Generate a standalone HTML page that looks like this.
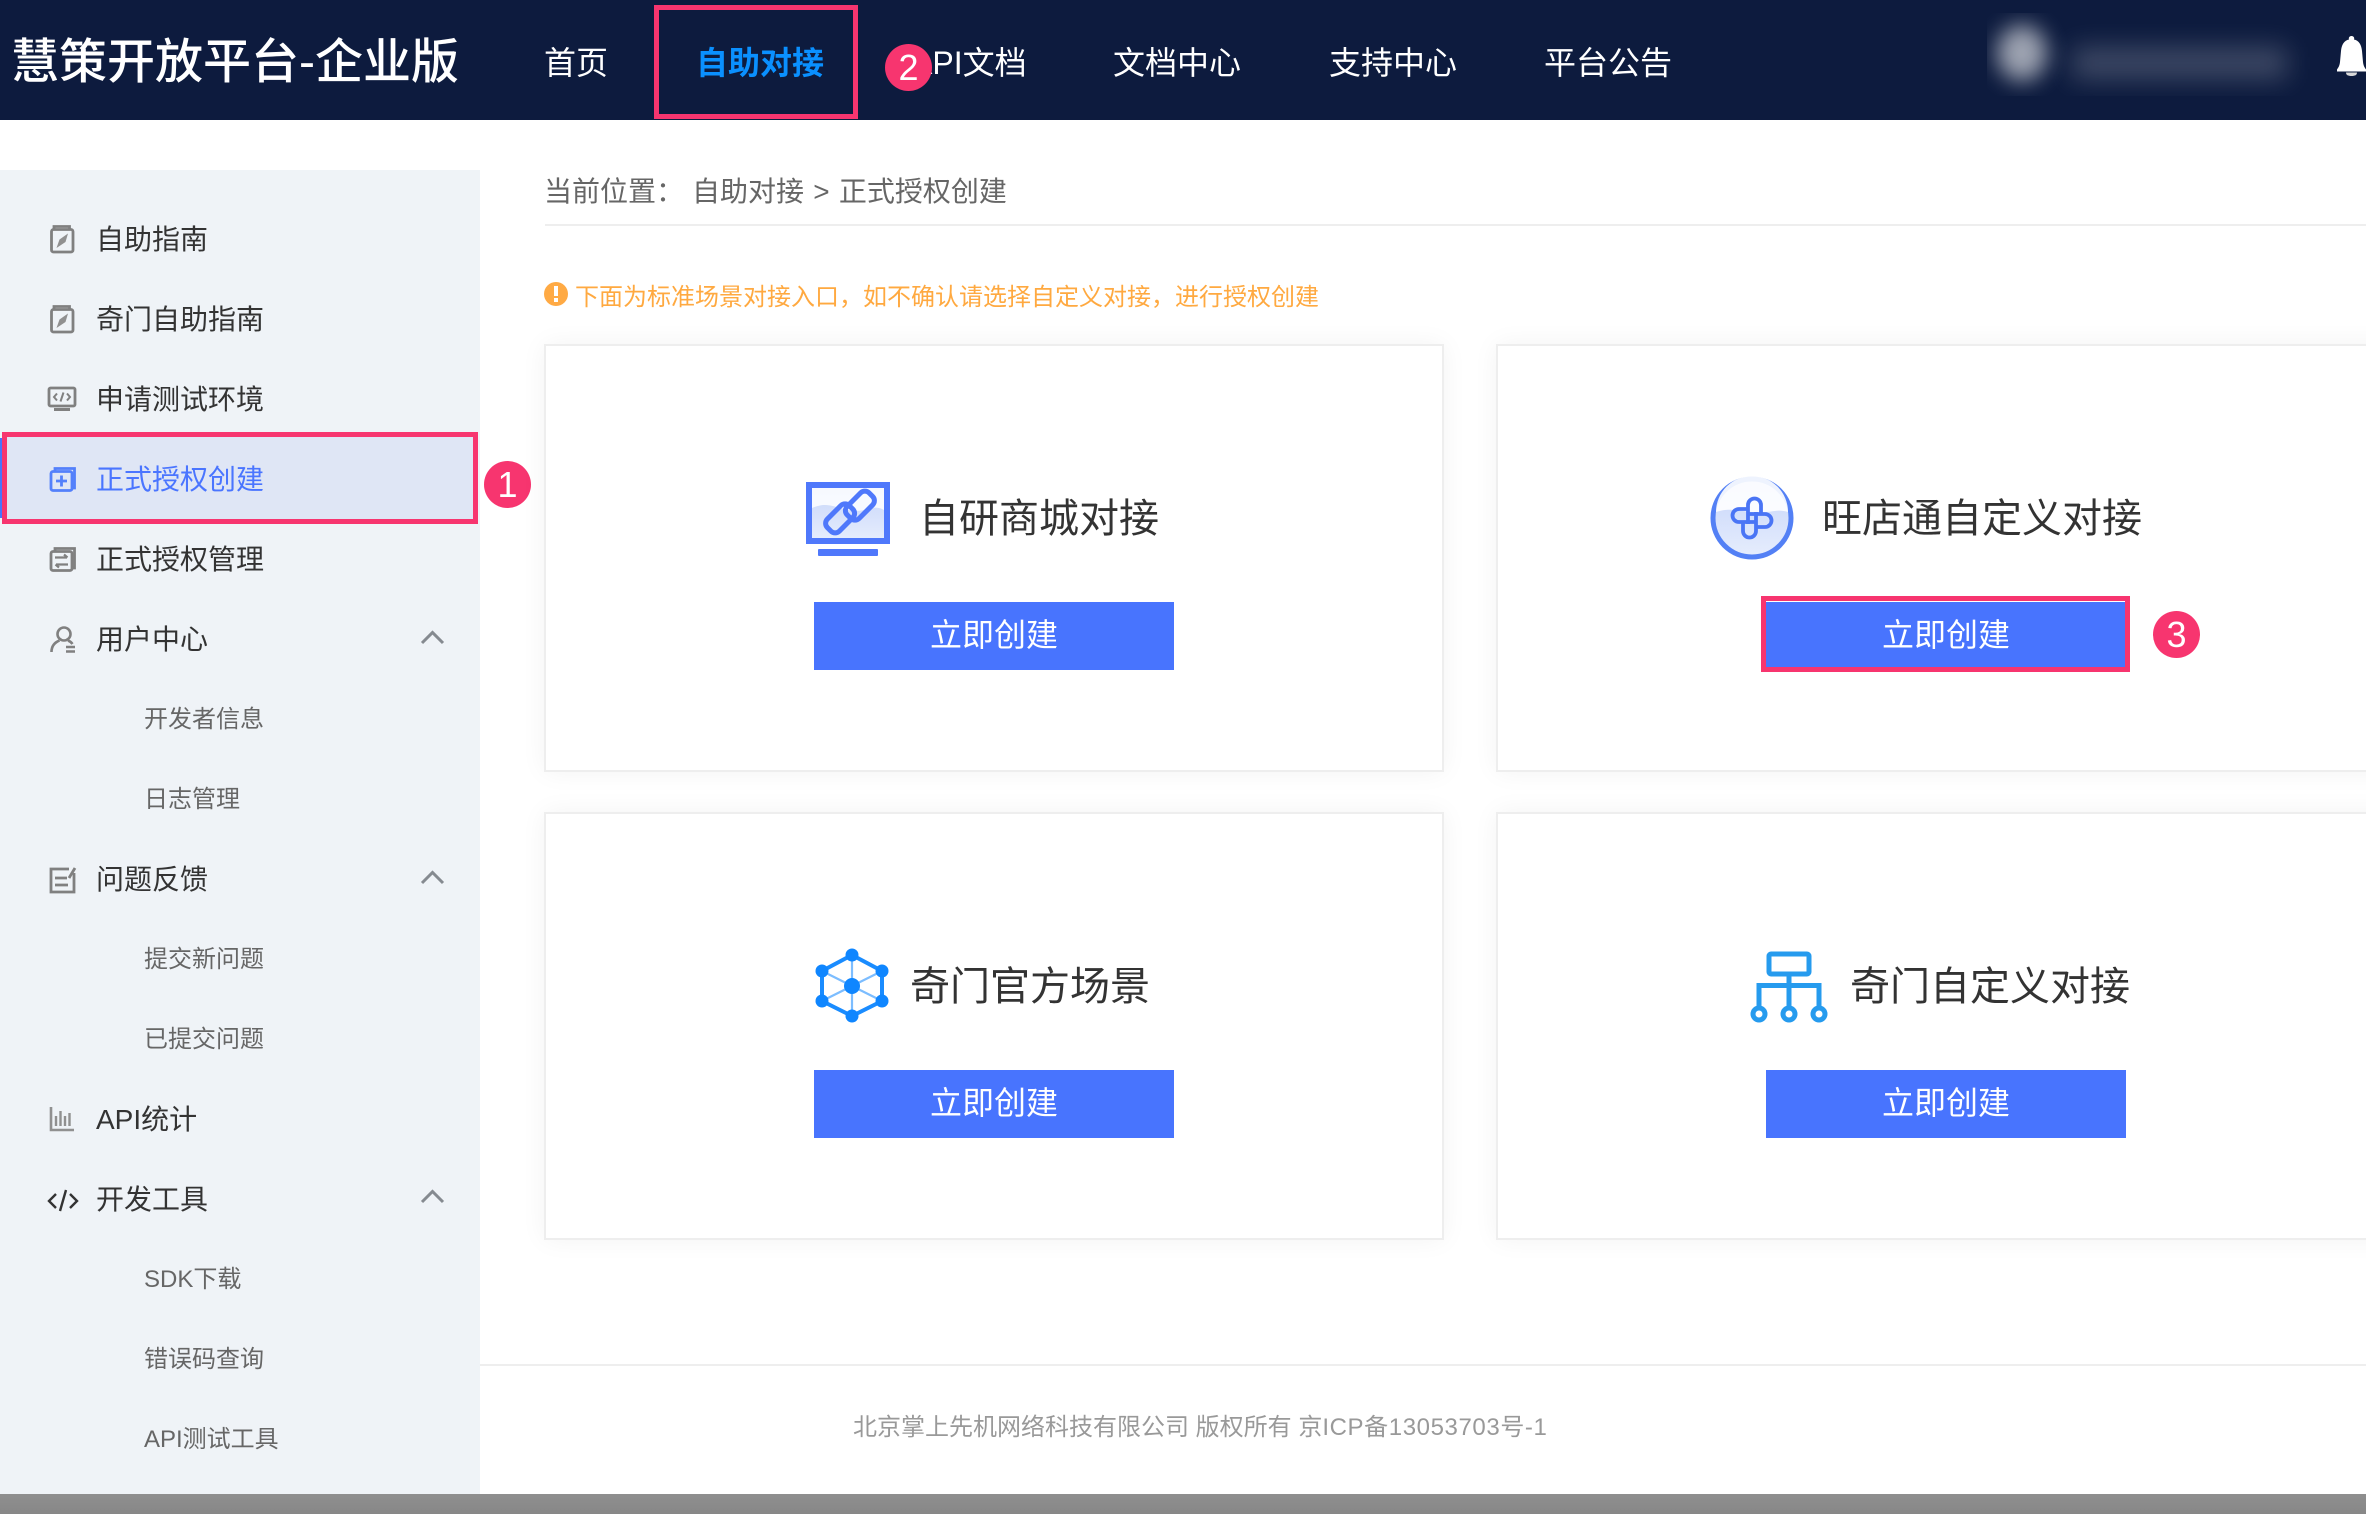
<!DOCTYPE html>
<html lang="zh-CN">
<head>
<meta charset="utf-8">
<title>慧策开放平台-企业版</title>
<style>
html,body{margin:0;padding:0;background:#fff}
body{position:relative;width:2366px;height:1514px;overflow:hidden;font-family:"Liberation Sans","Noto Sans CJK SC",sans-serif;color:#333}
.a{position:absolute}
.t{position:absolute;white-space:nowrap}
.nav{font-size:32px;line-height:48px;top:39px;color:#fff}
.m{font-size:28px;line-height:40px;left:96px;color:#333}
.s{font-size:24px;line-height:36px;left:144px;color:#666}
.card{position:absolute;box-sizing:border-box;width:900px;height:428px;background:#fff;border:2px solid #eee;box-shadow:0 0 24px rgba(0,0,0,.05)}
.btn{position:absolute;width:360px;height:68px;line-height:66px;background:#4874fe;color:#fff;font-size:32px;text-align:center}
.h{font-size:40px;line-height:56px;color:#333}
.pink{position:absolute;box-sizing:border-box;border:5px solid #f7356f}
.dot{position:absolute;width:47px;height:47px;border-radius:50%;background:#f7356f;color:#fff;font-size:36px;line-height:47px;text-align:center}
</style>
</head>
<body>
<!-- header -->
<div class="a" style="left:0;top:0;width:2366px;height:120px;background:#0d1b3e"></div>
<div class="t" style="left:11px;top:29px;font-size:48px;line-height:68px;font-weight:500;color:#fff">慧策开放平台-企业版</div>
<div class="t nav" style="left:544px">首页</div>
<div class="t nav" style="left:696px;color:#0a90ff;font-weight:700">自助对接</div>
<div class="t nav" style="left:911px">API文档</div>
<div class="t nav" style="left:1113px">文档中心</div>
<div class="t nav" style="left:1329px">支持中心</div>
<div class="t nav" style="left:1544px">平台公告</div>
<div class="pink" style="left:654px;top:5px;width:204px;height:114px"></div>
<div class="dot" style="left:885px;top:44px">2</div>
<!-- blurred user -->
<div class="a" style="left:1987px;top:13px;width:328px;height:83px;overflow:hidden">
  <div class="a" style="left:10px;top:12px;width:50px;height:56px;border-radius:50%;background:rgba(255,255,255,.6);filter:blur(11px)"></div>
  <div class="a" style="left:85px;top:34px;width:215px;height:32px;background:rgba(255,255,255,.2);filter:blur(13px)"></div>
</div>

<!-- sidebar -->
<div class="a" style="left:0;top:170px;width:480px;height:1324px;background:#eff3f7"></div>
<div class="a" style="left:0;top:438px;width:4px;height:80px;background:#4874fe"></div>
<div class="a" style="left:2px;top:432px;width:476px;height:92px;background:#dfe6f5"></div>
<div class="pink" style="left:2px;top:432px;width:476px;height:92px"></div>
<div class="dot" style="left:484px;top:461px">1</div>

<div class="t m" style="top:220px">自助指南</div>
<div class="t m" style="top:300px">奇门自助指南</div>
<div class="t m" style="top:380px">申请测试环境</div>
<div class="t m" style="top:460px;color:#4a75ff">正式授权创建</div>
<div class="t m" style="top:540px">正式授权管理</div>
<div class="t m" style="top:620px">用户中心</div>
<div class="t s" style="top:702px">开发者信息</div>
<div class="t s" style="top:782px">日志管理</div>
<div class="t m" style="top:860px">问题反馈</div>
<div class="t s" style="top:942px">提交新问题</div>
<div class="t s" style="top:1022px">已提交问题</div>
<div class="t m" style="top:1100px">API统计</div>
<div class="t m" style="top:1180px">开发工具</div>
<div class="t s" style="top:1262px">SDK下载</div>
<div class="t s" style="top:1342px">错误码查询</div>
<div class="t s" style="top:1422px">API测试工具</div>

<!-- content head -->
<div class="t" style="left:544px;top:172px;font-size:28px;line-height:40px;color:#666">当前位置：</div>
<div class="t" style="left:692px;top:172px;font-size:28px;line-height:40px;word-spacing:1.500px;color:#666">自助对接 &gt; 正式授权创建</div>
<div class="a" style="left:545px;top:224px;width:1821px;height:2px;background:#eee"></div>
<div class="t" style="left:575px;top:280px;font-size:24px;line-height:36px;color:#ffa940">下面为标准场景对接入口，如不确认请选择自定义对接，进行授权创建</div>

<!-- cards -->
<div class="card" style="left:544px;top:344px"></div>
<div class="card" style="left:1496px;top:344px"></div>
<div class="card" style="left:544px;top:812px"></div>
<div class="card" style="left:1496px;top:812px"></div>

<div class="t h" style="left:919px;top:491px">自研商城对接</div>
<div class="t h" style="left:1822px;top:491px">旺店通自定义对接</div>
<div class="t h" style="left:910px;top:959px">奇门官方场景</div>
<div class="t h" style="left:1850px;top:959px">奇门自定义对接</div>

<div class="btn" style="left:814px;top:602px">立即创建</div>
<div class="a" style="left:1766px;top:600px;width:360px;height:2px;background:#fff"></div>
<div class="btn" style="left:1766px;top:602px">立即创建</div>
<div class="btn" style="left:814px;top:1070px">立即创建</div>
<div class="btn" style="left:1766px;top:1070px">立即创建</div>
<div class="pink" style="left:1761px;top:596px;width:369px;height:76px"></div>
<div class="dot" style="left:2153px;top:611px">3</div>

<!-- footer -->
<div class="a" style="left:480px;top:1364px;width:1886px;height:2px;background:#eee"></div>
<div class="t" style="left:853px;top:1410px;font-size:24px;line-height:36px;color:#999">北京掌上先机网络科技有限公司 版权所有 京<span style="letter-spacing:.6px">ICP备13053703号-1</span></div>
<div class="a" style="left:0;top:1494px;width:2366px;height:20px;background:linear-gradient(#8f8f8f,#878787)"></div>

<!-- icons -->
<svg class="a" style="left:0;top:0" width="2366" height="1514" viewBox="0 0 2366 1514" fill="none">
<defs>
<linearGradient id="g1" x1="0" y1="0" x2="0" y2="1"><stop offset="0" stop-color="#c5d4f9"/><stop offset="1" stop-color="#e6edfd"/></linearGradient>
<g id="guide" stroke="#808080" stroke-width="2.800">
  <path d="M54 229V226.500H69.500V229"/>
  <rect x="51.500" y="229.500" width="21.500" height="22.500" rx="2"/>
  <path d="M68 233.500L65.500 242L56.500 248L59.500 239.500Z" fill="#909090" stroke="none"/>
</g>
<path id="chev" d="M422 643L432.500 632.500L443 643" stroke="#858a90" stroke-width="3"/>
<g id="mgr" stroke-width="2.800">
  <path d="M55 471V468.500H74.500V488H72"/>
  <rect x="51" y="471.500" width="21" height="19" rx="2"/>
</g>
</defs>

<!-- bell -->
<path d="M2351.500 36a2.500 2.500 0 0 1 2.500 3.500c5 1 7.500 5.500 8 11.500l1 11c.4 4 2 6 3 7.500v2h-29v-2c1-1.500 2.600-3.500 3-7.500l1-11c.5-6 3-10.500 8-11.500a2.500 2.500 0 0 1 2.500-3.500z" fill="#fff"/>
<path d="M2346 72.500h11c0 2.500-2 3.500-5.500 3.500s-5.500-1-5.500-3.500z" fill="#d8d8d8"/>

<!-- side icons -->
<use href="#guide"/>
<use href="#guide" y="80"/>
<g stroke="#808080" stroke-width="2.800">
  <rect x="49" y="388" width="26" height="18" rx="1.500"/>
  <path d="M54 409.500H70" stroke-width="3"/>
  <path d="M57 393.500L54 397L57 400.500M67 393.500L70 397L67 400.500M63.500 392.500L60.500 401.500" stroke-width="2"/>
</g>
<use href="#mgr" stroke="#5380fb"/>
<path d="M61.500 475.500v11M56 481h11" stroke="#5380fb" stroke-width="2.800"/>
<use href="#mgr" y="80" stroke="#808080"/>
<path d="M55 557.500H67M64 554.500L67.500 557.500M68 564.500H56M59 567.500L55.500 564.500" stroke="#808080" stroke-width="2.200"/>
<g stroke="#808080" stroke-width="2.600">
  <circle cx="64" cy="634" r="6.500"/>
  <path d="M51.500 652c0-6 3-9.500 8-11.500M68 640.500c2 .8 3.500 2 4.500 3.500"/>
  <path d="M66 647h9M66 651.500h9"/>
</g>
<g stroke="#808080" stroke-width="2.800">
  <path d="M69 869H51V892H74V873"/>
  <path d="M55 878H67M55 885H68"/>
  <path d="M69 878L75 868"/>
</g>
<g stroke="#909090" stroke-width="2.600">
  <path d="M51 1107V1130H74"/>
  <path d="M56 1126V1116M60.500 1126V1111M65 1126V1116M69.500 1126V1113" stroke-width="2.400"/>
</g>
<g stroke="#333" stroke-width="2.400">
  <path d="M56 1194L49 1201L56 1208M70 1194L77 1201L70 1208M66 1190L60 1211"/>
</g>
<use href="#chev"/>
<use href="#chev" y="240"/>
<use href="#chev" y="559"/>

<!-- warning -->
<circle cx="556" cy="294" r="12" fill="#ffaa44"/>
<path d="M556 286v10" stroke="#fff" stroke-width="4"/>
<rect x="554" y="298" width="4" height="4" fill="#fff"/>

<!-- monitor link -->
<path d="M809 485H887V541H809Z" fill="url(#g1)"/>
<path d="M812 488H884V510C872 503 866 514 848 510C832 506 826 502 812 508Z" fill="#fff" opacity=".85"/>
<rect x="809" y="485" width="78" height="56" stroke="#4f78fb" stroke-width="6"/>
<rect x="818" y="549" width="60" height="7" rx="1" fill="#4f78fb"/>
<g transform="translate(850 512) rotate(-45)" stroke="#4f78fb" stroke-width="5">
  <rect x="-27" y="-11" width="31" height="17" rx="6"/>
  <rect x="-4" y="-6" width="31" height="17" rx="6"/>
</g>

<!-- wang circle -->
<circle cx="1752" cy="518" r="39" fill="url(#g1)" stroke="#5380f5" stroke-width="5"/>
<path d="M1716 512a36 36 0 0 1 72 0c-12-4-18 2-36 0s-24-4-36 0z" fill="#fff" opacity=".9"/>
<g transform="translate(1752 518)" stroke="#4a75f5" stroke-width="3.800">
  <path d="M-4 6V-13A6.500 6.500 0 0 1 9 -13V-5"/>
  <path d="M-5 -4H13A6.500 6.500 0 0 1 13 9H5"/>
  <path d="M4 -6V13A6.500 6.500 0 0 1 -9 13V5"/>
  <path d="M5 4H-13A6.500 6.500 0 0 1 -13 -9H-5"/>
</g>

<!-- hex -->
<g stroke="#1a8cff" stroke-width="4">
  <path d="M852 955L882 971V1001L852 1016L822 1001V971Z"/>
</g>
<g stroke="#7cbdff" stroke-width="2.200">
  <path d="M852 955V1016M822 971L882 1001M882 971L822 1001"/>
</g>
<g fill="#0f86ff">
  <circle cx="852" cy="955" r="6.500"/><circle cx="882" cy="971" r="6.500"/><circle cx="882" cy="1001" r="6.500"/>
  <circle cx="852" cy="1016" r="6.500"/><circle cx="822" cy="1001" r="6.500"/><circle cx="822" cy="971" r="6.500"/>
  <circle cx="852" cy="986" r="8"/>
</g>

<!-- tree -->
<g stroke="#269bee" stroke-width="5">
  <rect x="1769" y="954" width="40" height="20" rx="2"/>
  <path d="M1789 974V1007M1759 1007V985.500H1819V1007"/>
  <circle cx="1759" cy="1014" r="6"/><circle cx="1789" cy="1014" r="6"/><circle cx="1819" cy="1014" r="6"/>
</g>
</svg>
</body>
</html>
